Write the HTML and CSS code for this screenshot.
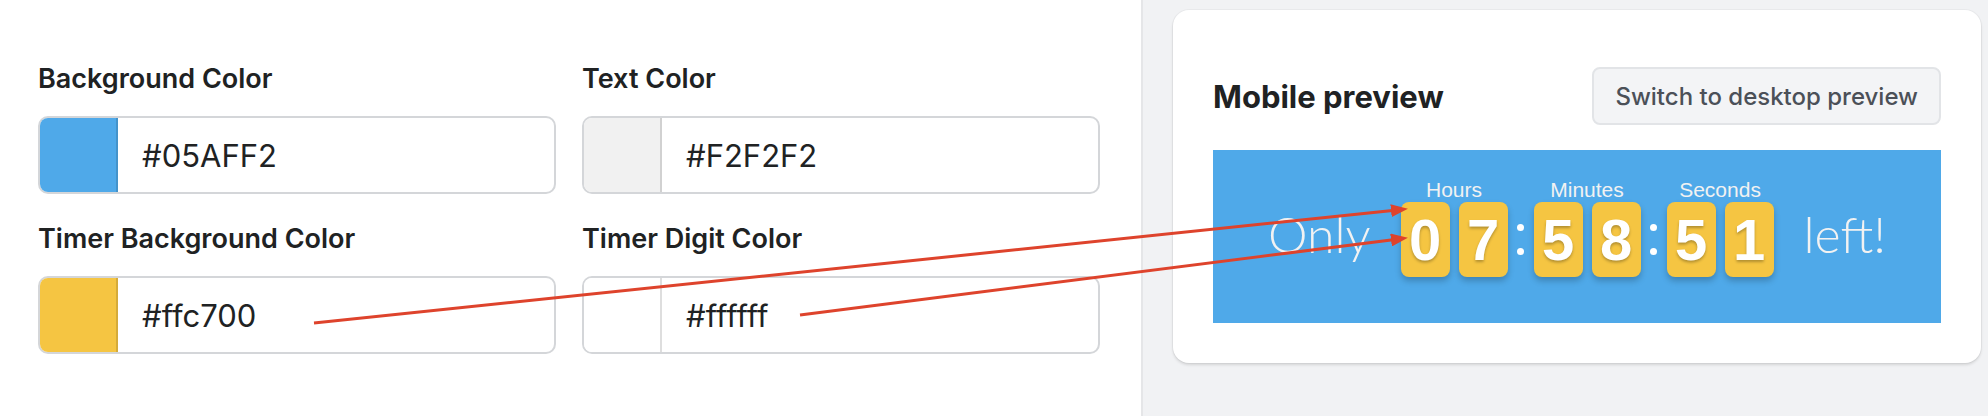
FILE: index.html
```html
<!DOCTYPE html>
<html lang="en">
<head>
<meta charset="utf-8">
<title>Countdown timer settings</title>
<link rel="stylesheet" href="styles.css">
</head>
<body>
<div class="page">
  <main class="settings">
    <div class="field-grid">
      <div class="field">
        <label class="field-label">Background Color</label>
        <div class="color-input">
          <span class="swatch" style="background:#4fa9e9"></span>
          <span class="color-value">#05AFF2</span>
        </div>
      </div>
      <div class="field">
        <label class="field-label">Text Color</label>
        <div class="color-input">
          <span class="swatch" style="background:#f1f1f1"></span>
          <span class="color-value">#F2F2F2</span>
        </div>
      </div>
      <div class="field">
        <label class="field-label">Timer Background Color</label>
        <div class="color-input">
          <span class="swatch" style="background:#f5c542"></span>
          <span class="color-value">#ffc700</span>
        </div>
      </div>
      <div class="field">
        <label class="field-label">Timer Digit Color</label>
        <div class="color-input">
          <span class="swatch" style="background:#ffffff"></span>
          <span class="color-value">#ffffff</span>
        </div>
      </div>
    </div>
  </main>

  <aside class="preview-pane">
    <section class="card">
      <header class="card-header">
        <h2 class="card-title">Mobile preview</h2>
        <button class="btn" type="button">Switch to desktop preview</button>
      </header>
      <div class="banner">
        <span class="banner-text">Only</span>
        <div class="timer">
          <div class="unit">
            <div class="unit-label">Hours</div>
            <div class="digits"><span class="digit">0</span><span class="digit">7</span></div>
          </div>
          <div class="sep"><i></i><i></i></div>
          <div class="unit">
            <div class="unit-label">Minutes</div>
            <div class="digits"><span class="digit">5</span><span class="digit">8</span></div>
          </div>
          <div class="sep"><i></i><i></i></div>
          <div class="unit">
            <div class="unit-label">Seconds</div>
            <div class="digits"><span class="digit">5</span><span class="digit">1</span></div>
          </div>
        </div>
        <span class="banner-text">left!</span>
      </div>
    </section>
  </aside>

  <svg class="annotations" width="1988" height="416" viewBox="0 0 1988 416" aria-hidden="true">
    <defs>
      <marker id="head" markerUnits="userSpaceOnUse" viewBox="0 0 17 13" markerWidth="17" markerHeight="13" refX="4" refY="6.5" orient="auto">
        <path d="M0 0 L17 6.5 L0 13 Z" fill="#de432c"/>
      </marker>
    </defs>
    <line x1="314" y1="323" x2="1395" y2="210.2" stroke="#de432c" stroke-width="3" marker-end="url(#head)"/>
    <line x1="800" y1="315" x2="1395" y2="239.5" stroke="#de432c" stroke-width="3" marker-end="url(#head)"/>
  </svg>
</div>
</body>
</html>
```

FILE: styles.css
```css
html, body {
  margin: 0;
  padding: 0;
  background: #ffffff;
}

body {
  font-family: Inter, "Liberation Sans", "Noto Sans", sans-serif;
  color: #202223;
}

.page {
  position: relative;
  display: flex;
  width: 1988px;
  height: 416px;
  overflow: hidden;
  background: #ffffff;
}

/* ---------- settings (left) ---------- */
.settings {
  box-sizing: border-box;
  width: 1143px;
  flex: none;
  padding: 59px 0 0 38px;
  border-right: 2px solid #e5e6e8;
  background: #ffffff;
}

.field-grid {
  display: grid;
  grid-template-columns: 518px 518px;
  column-gap: 26px;
  row-gap: 25px;
}

.field-label {
  display: block;
  font-size: 27px;
  font-weight: 600;
  line-height: 40px;
  color: #202223;
  margin-bottom: 17px;
}

.color-input {
  box-sizing: border-box;
  display: flex;
  align-items: center;
  height: 78px;
  border: 2px solid #d4d6d9;
  border-radius: 10px;
  overflow: hidden;
  background: #ffffff;
}

.swatch {
  align-self: stretch;
  width: 76px;
  flex: none;
  border-right: 2px solid rgba(0, 0, 0, 0.13);
}

.color-value {
  padding-left: 24px;
  font-size: 31px;
  font-weight: 400;
  color: #202223;
}

/* ---------- preview (right) ---------- */
.preview-pane {
  flex: 1;
  box-sizing: border-box;
  padding: 10px 7px 0 30px;
  background: #f1f2f4;
}

.card {
  background: #ffffff;
  border-radius: 16px;
  box-shadow: 0 2px 3px rgba(0, 0, 0, 0.12), 0 0 0 1px rgba(0, 0, 0, 0.03);
  padding: 57px 40px 40px;
}

.card-header {
  display: flex;
  align-items: center;
  justify-content: space-between;
  height: 58px;
  margin-bottom: 25px;
}

.card-title {
  margin: 0;
  font-size: 31px;
  font-weight: 700;
  color: #202223;
}

.btn {
  box-sizing: border-box;
  height: 58px;
  padding: 0 21px;
  font-family: Inter, "Liberation Sans", sans-serif;
  font-size: 24px;
  font-weight: 500;
  color: #4b5058;
  background: #f3f4f6;
  border: 2px solid #e2e4e7;
  border-radius: 8px;
}

.banner {
  box-sizing: border-box;
  height: 173px;
  background: #4fa9e9;
  display: flex;
  justify-content: center;
  align-items: flex-end;
  gap: 30px;
  padding-bottom: 46px;
}

.banner-text {
  font-family: Lato, "Open Sans", sans-serif;
  font-weight: 300;
  font-size: 50px;
  line-height: 50px;
  color: #f2f2f2;
  margin-bottom: 18px;
}

.timer {
  display: flex;
  align-items: flex-end;
}

.unit {
  display: flex;
  flex-direction: column;
  align-items: center;
}

.unit-label {
  font-family: "Liberation Sans", Arial, sans-serif;
  font-size: 21px;
  line-height: 25px;
  color: #f2f2f2;
}

.digits {
  display: flex;
  gap: 9px;
}

.digit {
  width: 49px;
  height: 75px;
  background: #f5c542;
  border-radius: 8px;
  box-shadow: 0 4px 6px rgba(0, 0, 0, 0.22);
  color: #ffffff;
  font-family: "Liberation Sans", Arial, sans-serif;
  font-weight: 700;
  font-size: 58px;
  line-height: 75px;
  text-align: center;
  text-shadow: 0 2px 3px rgba(0, 0, 0, 0.28);
}

.sep {
  width: 26px;
  height: 75px;
  display: flex;
  flex-direction: column;
  align-items: center;
  justify-content: center;
  gap: 17px;
}

.sep i {
  display: block;
  width: 7px;
  height: 7px;
  border-radius: 50%;
  background: #ffffff;
}

/* ---------- annotation overlay ---------- */
.annotations {
  position: absolute;
  left: 0;
  top: 0;
  pointer-events: none;
}
```
